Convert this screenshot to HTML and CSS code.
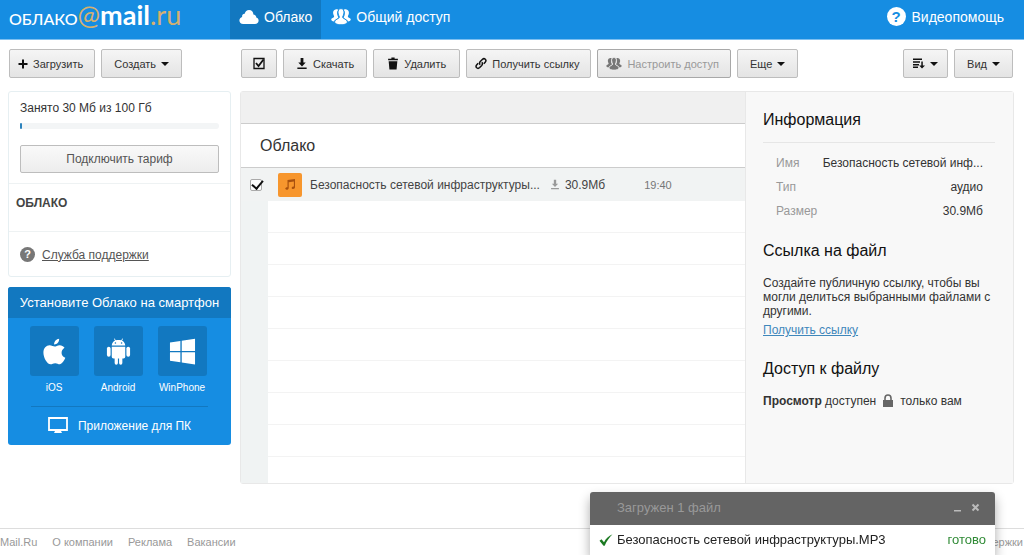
FILE: index.html
```html
<!DOCTYPE html>
<html lang="ru">
<head>
<meta charset="utf-8">
<title>Облако Mail.Ru</title>
<link rel="stylesheet" href="styles.css">
</head>
<body>
<svg class="defs" aria-hidden="true">
  <symbol id="people" viewBox="0 0 20 18">
    <path d="M4.500 1.500c1.400-.6 2.600 0 2.700.7-1.200 1.200-1.300 3.200-.7 5.200.3 1 .8 1.700 1 2.300-.2 1-4 1.600-4.400 3.800C1.200 13.300.1 12.500.2 11.300c.2-1.300 2.500-1.500 2.900-2.500.2-.8-.9-2-1-3.800-.1-1.800.8-3.200 2.400-3.500zM15.500 1.500c-1.400-.6-2.600 0-2.700.7 1.200 1.200 1.300 3.200.7 5.200-.3 1-.8 1.700-1 2.300.2 1 4 1.600 4.400 3.800 1.900-.2 3-1 2.900-2.200-.2-1.300-2.500-1.500-2.900-2.500-.2-.8.9-2 1-3.800.1-1.800-.8-3.200-2.400-3.500z"/>
    <path class="people-front" d="M10 .6c2 0 3.200 1.700 3 4.200-.1 1.700-1.100 3.400-1.400 4.200.1 2 4.600 2 4.800 4.800.1 1.900-3.100 3-6.400 3s-6.500-1.100-6.400-3c.2-2.800 4.700-2.800 4.800-4.800C8.100 8.200 7.100 6.500 7 4.800 6.800 2.300 8 .6 10 .6z"/>
  </symbol>
  <symbol id="download" viewBox="0 0 12 14">
    <path d="M4.500 1h3v5H10L6 10.200 2 6h2.500zM1 11.300h10V13H1z"/>
  </symbol>
</svg>

<header class="topbar">
  <a class="logo" href="#"><span class="logo-name">ОБЛАКО</span><span class="logo-at">@</span><span class="logo-mail">mail</span><span class="logo-ru">.ru</span></a>
  <nav class="tabs">
    <a class="tab tab-active" href="#"><svg class="icon-tab" viewBox="0 0 20 16"><path d="M4.200 15C1.800 15 .4 13.500.4 11.600c0-1.800 1.200-3.100 2.700-3.500C2.900 5.900 4 4.700 5.700 4.800 6.200 2.500 7.800 1 10 1c2.700 0 4.400 2 4.400 4.600 1.700.1 2.900 1.200 2.900 3 1.400.4 2.300 1.500 2.300 3 0 2-1.500 3.400-3.700 3.400z"/></svg>Облако</a>
    <a class="tab" href="#"><svg class="icon-tab"><use href="#people"/></svg>Общий доступ</a>
  </nav>
  <a class="video-help" href="#"><span class="help-mark">?</span>Видеопомощь</a>
</header>

<div class="toolbar">
  <div class="tools tools-side">
    <button class="btn btn-near"><svg class="icon-10" viewBox="0 0 10 10"><path d="M4 .5h2V4h3.500v2H6v3.500H4V6H.5V4H4z"/></svg>Загрузить</button>
    <button class="btn btn-menu">Создать<span class="caret"></span></button>
  </div>
  <div class="tools tools-main">
    <button class="btn" aria-label="Выделить все"><svg class="icon-12" viewBox="0 0 12 12"><path d="M1 1h10v10H1z" fill="none" stroke="currentColor" stroke-width="1.300"/><path d="M3 5.500l2.500 3L10.500 2" fill="none" stroke="currentColor" stroke-width="1.800"/></svg></button>
    <button class="btn btn-menu"><svg class="icon-12"><use href="#download"/></svg>Скачать</button>
    <button class="btn btn-roomy"><svg class="icon-12" viewBox="0 0 10 12"><path d="M3.500.5h3V1.500h3V3h-9V1.500h3zM1 4h8l-.7 7.500H1.700z"/></svg>Удалить</button>
    <button class="btn btn-near"><svg class="icon-12" viewBox="0 0 12 12"><g fill="none" stroke="currentColor" stroke-width="1.500"><path d="M5.200 7.300C4 6 4.500 5 5.300 4.100l2-2.100C8.300 1 9.400.9 10.300 1.700c.9.900.8 2-.1 3L8.800 6.200"/><path d="M6.800 4.700C8 6 7.500 7 6.700 7.900l-2 2.100c-1 1-2.100 1.100-3 .3-.9-.9-.8-2 .1-3l1.400-1.500"/></g></svg>Получить ссылку</button>
    <button class="btn btn-near" disabled><svg class="icon-people"><use href="#people"/></svg>Настроить доступ</button>
    <button class="btn btn-menu">Еще<span class="caret"></span></button>
  </div>
  <div class="tools">
    <button class="btn btn-sort" aria-label="Сортировка"><svg class="icon-12" viewBox="0 0 12 12"><path d="M0 1h9v1.500H0zM0 3.700h7v1.500H0zM0 6.400h6v1.500H0zM0 9h5v1.500H0zM8.300 4h1.500v4H12L9 11 6.200 8h2.100z"/></svg><span class="caret"></span></button>
    <button class="btn btn-menu">Вид<span class="caret"></span></button>
  </div>
</div>

<div class="layout">
  <aside class="sidebar">
    <div class="card">
      <section class="quota">
        <div class="quota-text" id="quota">Занято 30 Мб из 100 Гб</div>
        <div class="meter" role="img" aria-labelledby="quota"><div class="meter-fill"></div></div>
        <button class="btn btn-plan">Подключить тариф</button>
      </section>
      <section class="folders"><a href="#">ОБЛАКО</a></section>
      <section class="support"><span class="help-small">?</span><a href="#">Служба поддержки</a></section>
    </div>
    <div class="promo">
      <h2 class="promo-title">Установите Облако на смартфон</h2>
      <div class="apps">
        <a class="app" href="#"><span class="app-tile"><svg class="icon-app" viewBox="0 0 28 28"><path d="M18.800.8c.2 3.300-2.300 6-5.200 5.900C13.300 3.800 16 1 18.800.8z"/><path d="M14.200 8.800c1.200 0 3-1.500 5.200-1.400 2 .1 3.900 1 5 2.700-4.600 2.900-3.700 8.700.8 10.500-1.200 3.200-3.400 6.500-5.800 6.600-1.800 0-2.500-1.100-4.700-1.100s-2.900 1.100-4.600 1.100C6.200 27.300 2.500 20 2.500 15.200c0-4.800 3-7.700 6.400-7.700 2.200 0 3.900 1.300 5.300 1.300z"/></svg></span>iOS</a>
        <a class="app" href="#"><span class="app-tile"><svg class="icon-app" viewBox="0 0 28 28"><path d="M7 7.800c.2-2.500 1.600-4.200 3.400-5.100L9.200.8l.7-.4 1.300 2c1.800-.6 3.800-.6 5.600 0l1.300-2 .7.4-1.200 1.900c1.800.9 3.200 2.600 3.400 5.100z"/><path d="M7 9h14v10.500a1.800 1.800 0 0 1-1.800 1.800H18V26a1.700 1.700 0 0 1-3.400 0v-4.700h-1.200V26A1.700 1.700 0 0 1 10 26v-4.700H8.800A1.800 1.800 0 0 1 7 19.500z"/><rect x="2" y="9" width="3.800" height="10.500" rx="1.900"/><rect x="22.200" y="9" width="3.800" height="10.500" rx="1.900"/><circle class="app-eye" cx="10.800" cy="5.200" r=".8"/><circle class="app-eye" cx="17.200" cy="5.200" r=".8"/></svg></span>Android</a>
        <a class="app" href="#"><span class="app-tile"><svg class="icon-app" viewBox="0 0 28 28"><path d="M1 4.700l10.800-1.600v10.400H1zM13.200 2.900L27 .8v12.700H13.200zM1 14.900h10.800v10.300L1 23.600zM13.200 14.900H27v12.600l-13.800-2.100z"/></svg></span>WinPhone</a>
      </div>
      <a class="desktop" href="#"><svg class="icon-desktop" viewBox="0 0 20 17"><path d="M1 1h18v12H1z" fill="none" stroke="currentColor" stroke-width="1.800"/><path d="M7.500 13h5l1.500 3H6z"/></svg>Приложение для ПК</a>
    </div>
  </aside>

  <main class="content">
    <section class="files">
      <div class="files-strip"></div>
      <h1 class="files-title">Облако</h1>
      <div class="file-row">
        <input class="file-check" type="checkbox" aria-label="Безопасность сетевой инфраструктуры" checked>
        <span class="file-icon"><svg class="icon-12" viewBox="0 0 12 12"><path d="M3.500 1.500L11 .5v8.300c0 1-.9 1.700-1.900 1.700-.8 0-1.400-.4-1.400-1.100 0-.9 1-1.500 2.200-1.400V3L4.700 3.700v5.800c0 1-.9 1.800-2 1.800-.8 0-1.400-.5-1.400-1.200 0-.9 1-1.500 2.200-1.400z"/></svg></span>
        <span class="file-name">Безопасность сетевой инфраструктуры...</span>
        <svg class="icon-save"><use href="#download"/></svg>
        <span class="file-size">30.9Мб</span>
        <span class="file-time">19:40</span>
      </div>
      <div class="empty-rows"></div>
    </section>
    <aside class="info">
      <h2 class="info-heading info-first">Информация</h2>
      <dl class="props">
        <div class="prop"><dt>Имя</dt><dd>Безопасность сетевой инф...</dd></div>
        <div class="prop"><dt>Тип</dt><dd>аудио</dd></div>
        <div class="prop"><dt>Размер</dt><dd>30.9Мб</dd></div>
      </dl>
      <h2 class="info-heading">Ссылка на файл</h2>
      <p class="info-text">Создайте публичную ссылку, чтобы вы могли делиться выбранными файлами с другими.</p>
      <a class="info-link" href="#">Получить ссылку</a>
      <h2 class="info-heading info-access">Доступ к файлу</h2>
      <p class="access"><span><b>Просмотр</b> доступен</span><svg class="icon-lock" viewBox="0 0 12 14"><path d="M1 6h10v7H1z"/><path d="M3 7V4.200C3 2.300 4.300 1 6 1s3 1.300 3 3.200V7" fill="none" stroke="currentColor" stroke-width="1.600"/></svg><span>только вам</span></p>
    </aside>
  </main>
</div>

<footer class="footer">
  <a href="#">Mail.Ru</a><a href="#">О компании</a><a href="#">Реклама</a><a href="#">Вакансии</a>
  <a class="footer-last" href="#">Служба поддержки</a>
</footer>

<div class="toast" role="status">
  <div class="toast-head">
    <span class="toast-title">Загружен 1 файл</span>
    <button class="toast-btn" aria-label="Свернуть"><svg class="icon-9" viewBox="0 0 9 9"><path d="M1 7h7v1.500H1z"/></svg></button>
    <button class="toast-btn" aria-label="Закрыть"><svg class="icon-9" viewBox="0 0 9 9"><path d="M1.500 1.500l6 6M7.500 1.500l-6 6" stroke="currentColor" stroke-width="2"/></svg></button>
  </div>
  <div class="toast-row">
    <svg class="icon-done" viewBox="0 0 14 12"><path d="M.5 6.800l2-1.600L5 8.200C7 4.500 9.500 2 13.500.3 10.300 3.500 7.700 7 5.700 11.700H4.500z"/></svg>
    <span class="toast-file">Безопасность сетевой инфраструктуры.MP3</span>
    <span class="toast-state">готово</span>
  </div>
</div>
</body>
</html>
```
FILE: styles.css
```css
* { box-sizing: border-box; }

body {
  margin: 0;
  min-height: 100vh;
  display: flex;
  flex-direction: column;
  background: #fff;
  color: #333;
  font: 12px/14px "Liberation Sans", Arial, sans-serif;
}

a { color: inherit; text-decoration: none; }
h1, h2, p, dl, dd { margin: 0; font-weight: normal; }
svg { fill: currentColor; flex: none; }
.defs { display: none; }

/* Top bar */
.topbar {
  --icon-gap: #168de2;
  display: flex;
  height: 40px;
  background: #168de2;
  border-bottom: 1px solid #7dbff0;
  color: #fff;
}
.logo {
  display: flex;
  align-items: baseline;
  width: 230px;
  padding-left: 9px;
  font-family: Lato, sans-serif;
  font-size: 27px;
  line-height: 30px;
}
.logo-name { font-size: 16px; font-weight: 500; }
.logo-at, .logo-ru { color: #d5b070; }
.logo-mail { font-weight: bold; }
.tabs { display: flex; flex: 1; }
.tab {
  display: flex;
  align-items: center;
  gap: 5px;
  padding: 0 16px 5px 10px;
  font-size: 14px;
}
.tab-active { padding: 0 9px 5px; background: #1278c0; }
.icon-tab { width: 20px; height: 18px; }
.people-front { stroke: var(--icon-gap); stroke-width: 1px; }
.video-help {
  display: flex;
  align-items: center;
  gap: 6px;
  padding: 0 20px 6px 0;
  font-size: 14px;
}
.help-mark {
  width: 19px;
  border-radius: 50%;
  background: #fff;
  color: #168de2;
  font-size: 15px;
  font-weight: bold;
  line-height: 19px;
  text-align: center;
}

/* Toolbar */
.toolbar { --icon-gap: #ececec; display: flex; padding: 9px 11px 13px 9px; font-size: 11px; }
.tools { display: flex; gap: 6px; }
.tools-side { width: 232px; }
.tools-main { flex: 1; }
.btn {
  display: flex;
  align-items: center;
  justify-content: center;
  gap: 5px;
  height: 29px;
  padding: 0 11px;
  border: 1px solid #bdbdbd;
  border-radius: 2px;
  background: linear-gradient(#f5f5f5, #e4e4e4);
  color: #333;
  font: inherit;
  white-space: nowrap;
}
.btn-near { padding: 0 11px 0 8px; }
.btn-menu { padding: 0 12px; }
.btn-roomy { padding: 0 13px; }
.btn-sort { padding: 0 9px; }
.btn:disabled { border-color: #a8a8a8; color: #999; }
.btn svg { color: #111; }
.btn:disabled svg { color: #777; }
.caret {
  border: 4px solid transparent;
  border-top-color: #111;
  border-bottom-width: 0;
}
.icon-9 { width: 9px; height: 9px; }
.icon-10 { width: 10px; height: 10px; }
.icon-12 { width: 12px; height: 13px; }
.icon-people { width: 16px; height: 14px; }

/* Page columns */
.layout { display: flex; flex: 1; gap: 9px; padding: 0 10px 44px 8px; }
.sidebar { display: flex; flex-direction: column; gap: 10px; width: 223px; }
.card { border: 1px solid #e6eff2; border-radius: 3px; }
.quota { padding: 9px 11px 10px; }
.meter { height: 6px; margin: 8px 0 16px; background: #f3f5f6; border-radius: 3px; }
.meter-fill { width: 2px; height: 6px; background: #2d83bd; border-radius: 1px; }
.btn-plan { width: 100%; height: 28px; background: linear-gradient(#f9f9f9, #ededed); color: #555; }
.folders { height: 49px; padding: 12px 7px; border: solid #eef2f3; border-width: 1px 0; font-weight: bold; color: #444; }
.support { display: flex; align-items: center; gap: 7px; padding: 15px 11px 14px; color: #555; }
.support a { text-decoration: underline; }
.help-small {
  width: 15px;
  border-radius: 50%;
  background: #777;
  color: #fff;
  font-size: 11px;
  font-weight: bold;
  line-height: 15px;
  text-align: center;
}

.promo { border-radius: 3px; overflow: hidden; background: #168de2; color: #fff; }
.promo-title { background: #1278c0; font-size: 13px; line-height: 31px; text-align: center; white-space: nowrap; }
.apps { display: flex; justify-content: center; gap: 15px; padding: 8px 3px 11px 0; }
.app {
  display: flex;
  flex-direction: column;
  align-items: center;
  gap: 5px;
  width: 49px;
  font-size: 10px;
}
.app-tile { display: flex; align-items: center; justify-content: center; width: 49px; height: 50px; border-radius: 3px; background: #1278c0; }
.icon-app { width: 27px; height: 27px; }
.app-eye { fill: #1278c0; }
.desktop {
  display: flex;
  align-items: center;
  justify-content: center;
  gap: 10px;
  margin: 0 23px;
  padding: 10px 0 11px;
  border-top: 1px solid #1278c0;
}
.icon-desktop { width: 20px; height: 17px; }

.content { display: flex; flex: 1; min-width: 0; border: 1px solid #e8e8e8; border-radius: 3px; }
.files { display: flex; flex-direction: column; flex: 1; min-width: 0; }
.files-strip { height: 31px; background: #f0f0f0; }
.files-title {
  padding: 0 19px;
  border: solid #ccc;
  border-width: 1px 0;
  font-size: 16px;
  line-height: 43px;
}
.file-row { display: flex; align-items: center; height: 33px; padding-left: 9px; background: #f1f3f3; color: #444; }
.file-check {
  appearance: none;
  width: 12px;
  height: 12px;
  margin: 0 16px 0 0;
  border: 1px solid #aaa;
  border-radius: 2px;
  background: #fff;
}
.file-check:checked::before {
  content: "";
  display: block;
  width: 5px;
  height: 9px;
  margin: -2px 0 0 3px;
  border: solid #111;
  border-width: 0 2px 2px 0;
  transform: rotate(40deg);
}
.file-icon { display: flex; align-items: center; justify-content: center; width: 24px; height: 24px; margin-right: 8px; border-radius: 2px; background: #f7962d; color: #a8500e; }
.file-name { overflow: hidden; text-overflow: ellipsis; white-space: nowrap; }
.icon-save { width: 10px; height: 11px; margin: 0 5px 0 10px; color: #999; }
.file-time { margin-left: 39px; font-size: 11px; color: #777; }
.empty-rows {
  flex: 1;
  border-left: 27px solid #f0f3f3;
  background: repeating-linear-gradient(#fff 0 31px, #f3f3f3 31px 32px);
}

/* File details */
.info { width: 268px; padding: 18px 18px 0 17px; border-left: 1px solid #e8e8e8; background: #f8f8f8; }
.info-heading { font-size: 16px; line-height: 20px; color: #111; }
.info-first { padding-bottom: 12px; border-bottom: 1px solid #e6e6e6; }
.props { padding: 8px 12px 18px 13px; line-height: 24px; }
.prop { display: flex; justify-content: space-between; white-space: nowrap; }
.props dt { color: #999; }
.info-text { margin: 15px -6px 0 0; }
.info-link { display: block; margin-top: 5px; color: #3f87bb; text-decoration: underline; }
.info-access { margin-top: 22px; }
.access { display: flex; align-items: center; gap: 6px; margin-top: 15px; }
.icon-lock { width: 12px; height: 14px; color: #666; }

/* Footer */
.footer { display: flex; gap: 15px; height: 27px; padding-right: 1px; border-top: 1px solid #ddd; font-size: 11px; line-height: 26px; color: #999; }
.footer-last { margin-left: auto; }

/* Upload notification */
.toast { position: fixed; right: 29px; bottom: 0; width: 405px; border-radius: 3px 3px 0 0; background: #fff; box-shadow: 0 6px 12px #0005; font-size: 13px; }
.toast-head { display: flex; align-items: center; gap: 9px; height: 33px; padding: 0 15px 2px 27px; border-radius: 3px 3px 0 0; background: #646464; color: #999; }
.toast-title { flex: 1; }
.toast-btn { display: flex; padding: 0; border: 0; background: none; color: #bbb; }
.toast-row { display: flex; align-items: center; gap: 4px; height: 30px; padding: 0 9px; color: #222; }
.icon-done { width: 14px; height: 12px; color: #1c7a22; }
.toast-file { flex: 1; }
.toast-state { color: #2f8a35; }
```
